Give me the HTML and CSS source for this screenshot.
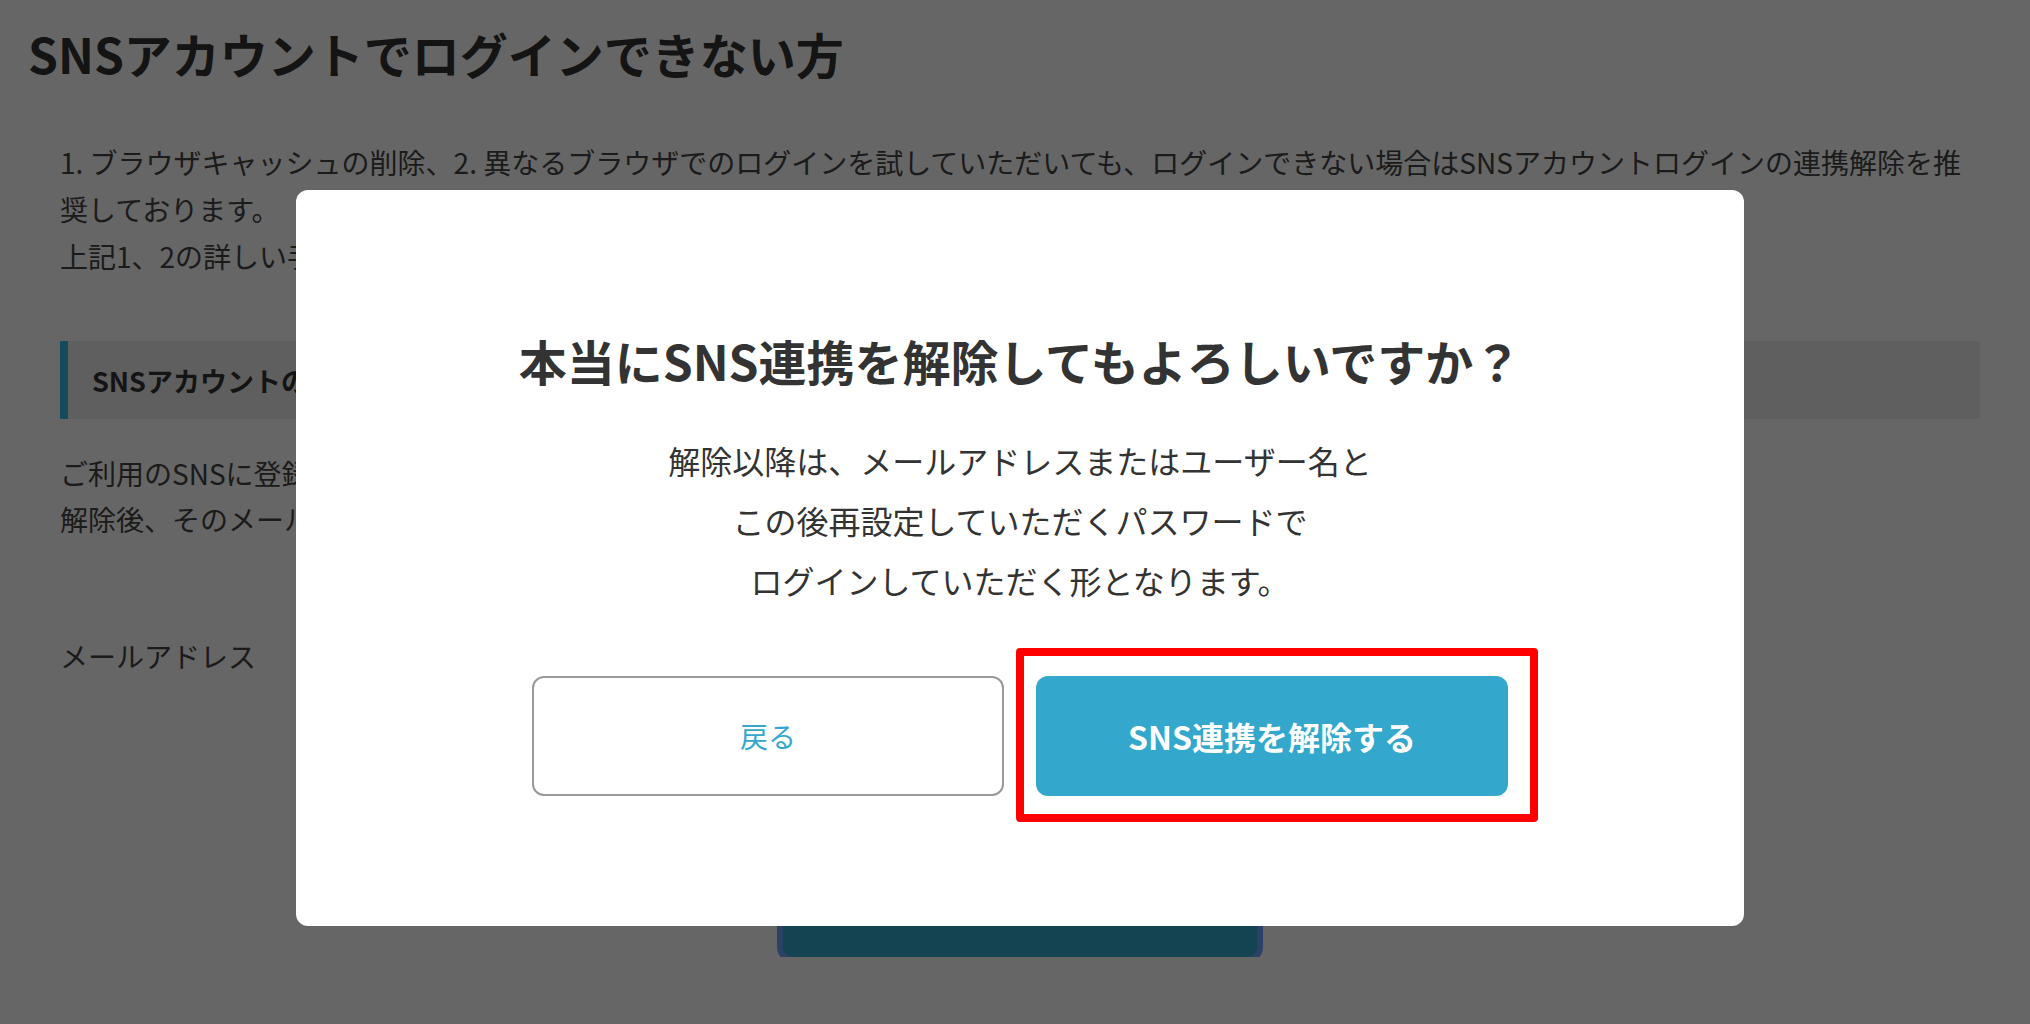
FILE: index.html
```html
<!DOCTYPE html>
<html lang="ja">
<head>
    <meta charset="UTF-8">
    <meta name="viewport" content="width=device-width, initial-scale=1.0">
    <title>SNSアカウントでログインできない方</title>
    <link rel="stylesheet" href="styles.css">
</head>
<body>
    <div class="page">
        <h1 class="page-title">SNSアカウントでログインできない方</h1>

        <div class="content">
            <p class="lead">
                1. ブラウザキャッシュの削除、2. 異なるブラウザでのログインを試していただいても、ログインできない場合はSNSアカウントログインの連携解除を推<br>
                奨しております。<br>
                上記1、2の詳しい手順はこちらをご確認ください。
            </p>

            <h2 class="section-title">SNSアカウントの連携解除</h2>

            <p class="section-text">
                ご利用のSNSに登録済みのメールを確認します。<br>
                解除後、そのメールアドレスでログインできます。
            </p>

            <form class="unlink-form">
                <label class="field-label" for="email">メールアドレス</label>
                <input class="field-input" id="email" type="email">
                <button class="submit-button" type="button">SNS連携を解除する</button>
            </form>
        </div>
    </div>

    <div class="modal-overlay">
        <div class="modal">
            <h2 class="modal-title">本当にSNS連携を解除してもよろしいですか？</h2>
            <p class="modal-text">
                解除以降は、メールアドレスまたはユーザー名と<br>
                この後再設定していただくパスワードで<br>
                ログインしていただく形となります。
            </p>
            <div class="modal-actions">
                <button class="btn btn-back" type="button">戻る</button>
                <div class="highlight">
                    <button class="btn btn-primary" type="button">SNS連携を解除する</button>
                </div>
            </div>
        </div>
    </div>
</body>
</html>
```

FILE: styles.css
```css
body {
    font-family: "Noto Sans CJK JP", "Noto Sans", sans-serif;
    margin: 0;
    padding: 0;
    background: #fff;
    color: #444;
    overflow: hidden;
}

.page {
    padding: 0 50px 0 28px;
}

.page-title {
    margin: 18px 0 0;
    font-size: 48px;
    line-height: 70px;
    font-weight: 700;
    color: #333;
}

.content {
    padding-left: 32px;
}

.lead {
    margin: 51px 0 0;
    font-size: 28px;
    line-height: 47px;
}

.section-title {
    margin: 61px 0 0;
    height: 78px;
    display: flex;
    align-items: center;
    padding-left: 24px;
    background: #eee;
    border-left: 8px solid #3ab8e0;
    font-size: 27px;
    font-weight: 700;
    color: #333;
}

.section-text {
    margin: 31px 0 0;
    font-size: 28px;
    line-height: 46px;
}

.unlink-form {
    margin-top: 91px;
    display: flex;
    flex-direction: column;
    align-items: center;
}

.field-label {
    align-self: flex-start;
    font-size: 28px;
    line-height: 46px;
}

.field-input {
    margin-top: 24px;
    width: 960px;
    height: 80px;
    box-sizing: border-box;
    border: 2px solid #ccc;
    border-radius: 8px;
}

.submit-button {
    margin-top: 74px;
    width: 474px;
    height: 100px;
    border: none;
    border-radius: 10px;
    background: #33a8cc;
    color: #fff;
    font-family: inherit;
    font-size: 32px;
    font-weight: 700;
    box-shadow: 0 0 0 6px #6ea2ff;
}

/* dialog */
.modal-overlay {
    position: fixed;
    top: 0;
    left: 0;
    right: 0;
    bottom: 0;
    background: rgba(0, 0, 0, 0.6);
    display: flex;
    justify-content: center;
    align-items: flex-start;
    padding: 190px 0 0 10px;
}

.modal {
    width: 1448px;
    box-sizing: border-box;
    padding: 134px 0 130px;
    background: #fff;
    border-radius: 12px;
    text-align: center;
    color: #333;
}

.modal-title {
    margin: 0;
    font-size: 48px;
    line-height: 72px;
    font-weight: 700;
}

.modal-text {
    margin: 34px 0 0;
    font-size: 32px;
    line-height: 60px;
}

.modal-actions {
    margin-top: 66px;
    display: flex;
    justify-content: center;
    gap: 32px;
}

.btn {
    width: 472px;
    height: 120px;
    border-radius: 12px;
    font-family: inherit;
    cursor: pointer;
}

.btn-back {
    background: #fff;
    border: 2px solid #999;
    color: #33a8cc;
    font-size: 28px;
}

.btn-primary {
    display: block;
    background: #33a8cc;
    border: none;
    color: #fff;
    font-size: 32px;
    font-weight: 700;
}

.highlight {
    position: relative;
}

.highlight::after {
    content: "";
    position: absolute;
    top: -28px;
    left: -20px;
    right: -30px;
    bottom: -26px;
    border: 8px solid #ff0000;
    border-radius: 4px;
    pointer-events: none;
}
```
